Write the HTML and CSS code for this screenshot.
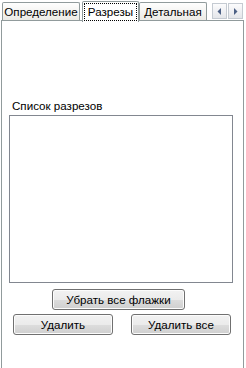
FILE: index.html
```html
<!DOCTYPE html>
<html lang="ru">
<head>
  <meta charset="UTF-8">
  <title>Разрезы</title>
  <link rel="stylesheet" href="styles.css">
</head>
<body>
  <div class="tabs">
    <div class="tab tab-first">Определение</div>
    <div class="tab tab-active"><span class="focus">Разрезы</span></div>
    <div class="tab tab-last">Детальная</div>
    <div class="scroll">
      <span class="scroll-btn"><svg width="5" height="7" viewBox="0 0 5 7"><path d="M4 0V7L0.5 3.5Z" fill="#4d6185"/></svg></span>
      <span class="scroll-btn"><svg width="5" height="7" viewBox="0 0 5 7"><path d="M1 0V7L4.5 3.5Z" fill="#4d6185"/></svg></span>
    </div>
  </div>
  <div class="panel">
    <div class="label">Список разрезов</div>
    <div class="listbox"></div>
    <div class="row row-center">
      <button class="btn btn-wide">Убрать все флажки</button>
    </div>
    <div class="row row-split">
      <button class="btn">Удалить</button>
      <button class="btn">Удалить все</button>
    </div>
  </div>
</body>
</html>
```

FILE: styles.css
```css
* {
  box-sizing: border-box;
}
html, body {
  height: 100%;
}
body {
  margin: 0;
  background: #fff;
  font-family: "Liberation Sans", Arial, sans-serif;
  font-size: 11.6px;
  color: #000;
  overflow: hidden;
}
.tabs {
  display: flex;
  align-items: flex-end;
  height: 21px;
  padding-left: 2px;
  padding-right: 3px;
  position: relative;
  z-index: 1;
}
.tab {
  height: 18px;
  margin-bottom: 1px;
  border: 1px solid #919b9c;
  border-bottom: none;
  border-radius: 2px 2px 0 0;
  background: linear-gradient(#fefefe, #ecebe6);
  white-space: nowrap;
  text-align: center;
  line-height: 17px;
}
.tab-first {
  width: 78px;
}
.tab-last {
  width: 68px;
}
.tab-active {
  width: 57px;
  height: 21px;
  margin-left: 2px;
  margin-bottom: -1px;
  padding: 1px 0 0 0;
  background: #fff;
}
.focus {
  display: block;
  height: 18px;
  margin: 0 1px;
  outline: 1px dotted #000;
  outline-offset: -1px;
  line-height: 17px;
}
.scroll {
  display: flex;
  margin-left: auto;
  margin-bottom: 2px;
  gap: 1px;
}
.scroll-btn {
  width: 15px;
  height: 16px;
  display: grid;
  place-content: center;
  border: 1px solid #c5cbd2;
  background: linear-gradient(#fcfcfd, #e4e6ea);
}
.scroll-btn svg {
  display: block;
}
.panel {
  height: 348px;
  margin: -1px 2px 0 1px;
  border: 1px solid #919b9c;
  border-bottom: none;
  background: #fff;
  padding: 77px 10px 0 7px;
}
.label {
  padding-left: 3px;
  line-height: 15px;
  height: 17px;
}
.listbox {
  height: 168px;
  border: 1px solid #828790;
  background: #fff;
}
.row {
  display: flex;
}
.row-center {
  margin-top: 6px;
  padding-left: 43px;
}
.row-split {
  margin-top: 4px;
  padding-left: 4px;
  gap: 18px;
}
.btn {
  width: 100px;
  height: 21px;
  padding: 0;
  font: inherit;
  color: #000;
  border: 1px solid #707070;
  border-radius: 3px;
  background: linear-gradient(#f2f2f2 0%, #ebebeb 50%, #dddddd 51%, #cfcfcf 100%);
  box-shadow: inset 0 0 0 1px #fcfcfc;
}
.btn-wide {
  width: 133px;
}
```
